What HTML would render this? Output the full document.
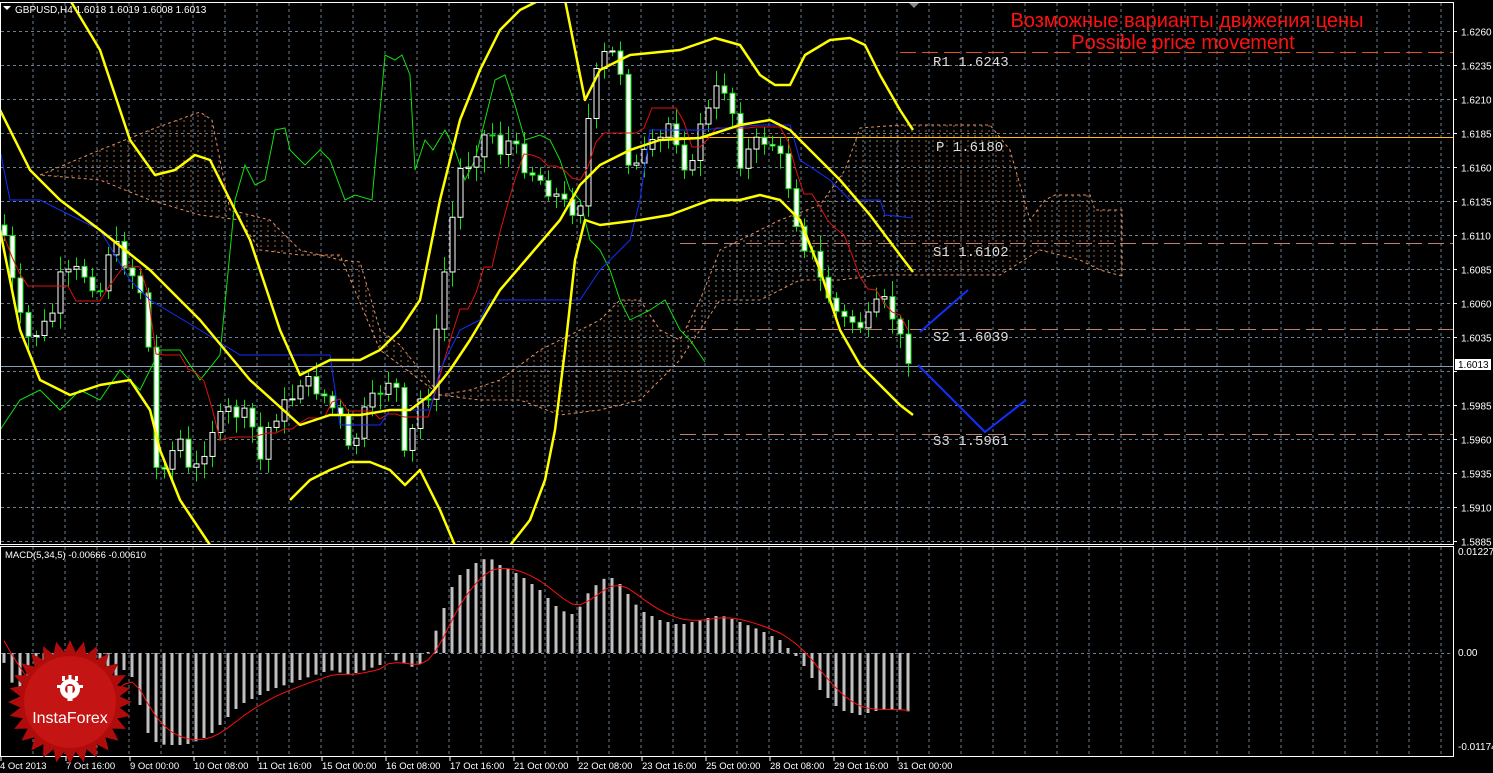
<!DOCTYPE html>
<html><head><meta charset="utf-8"><style>
html,body{margin:0;padding:0;background:#000;width:1493px;height:773px;overflow:hidden}
svg{display:block}
text{font-family:"Liberation Sans",sans-serif}
.mono text{font-family:"Liberation Mono",monospace}
</style></head><body>
<svg id="s" width="1493" height="773" xmlns="http://www.w3.org/2000/svg">
<rect width="1493" height="773" fill="#000"/>
<defs>
<clipPath id="main"><rect x="1" y="3" width="1452" height="541"/></clipPath>
<clipPath id="cloud"><polygon id="cp" points=""/></clipPath>
</defs>
<g id="grid"></g>
<g id="cloudg" clip-path="url(#main)"></g>
<g id="lines" clip-path="url(#main)"></g>
<g id="macd"></g>
<g id="logo" transform="translate(70,702)">
 <polygon id="star" fill="#b00c0c"/>
 <circle r="46" fill="#c41414"/>
 <g fill="#fff" transform="translate(0,-13)">
  <circle r="10"/><circle r="5" fill="#c41414"/>
  <rect x="-2.5" y="-3" width="5" height="15"/>
  <rect x="-8" y="-13" width="3" height="5"/><rect x="5" y="-13" width="3" height="5"/><rect x="-1.5" y="-14" width="3" height="5"/>
  <rect x="-13" y="-4" width="4" height="3"/><rect x="9" y="-4" width="4" height="3"/>
 </g>
 <text x="0" y="21" text-anchor="middle" fill="#fff" font-size="16">InstaForex</text>
</g>
<rect x="0.5" y="2.5" width="1453" height="542" fill="none" stroke="#fff" stroke-width="1"/>
<rect x="0.5" y="546.5" width="1453" height="210" fill="none" stroke="#fff" stroke-width="1"/>
<polygon points="3,6 11,6 7,10" fill="#fff"/>
<polygon points="909,3 919,3 914,8" fill="#888"/>
<text x="15" y="13" fill="#fff" font-size="10">GBPUSD,H4  1.6018 1.6019 1.6008 1.6013</text>
<text x="5" y="558" fill="#fff" font-size="9.5">MACD(5,34,5) -0.00666 -0.00610</text>
<text x="1187" y="27" text-anchor="middle" fill="#ff1010" font-size="20">Возможные варианты движения цены</text>
<text x="1183" y="49" text-anchor="middle" fill="#ff1010" font-size="20">Possible price movement</text>
<g class="mono" font-size="14" fill="#ddd">
<text x="933" y="66">R1 1.6243</text>
<text x="936" y="151">P 1.6180</text>
<text x="933" y="256">S1 1.6102</text>
<text x="933" y="341">S2 1.6039</text>
<text x="933" y="445">S3 1.5961</text>
</g>
<g id="axis" fill="#fff" font-size="10"></g>
</svg>
<script>
var NS="http://www.w3.org/2000/svg";
function el(p,t,a){var e=document.createElementNS(NS,t);for(var k in a)e.setAttribute(k,a[k]);p.appendChild(e);return e;}
var S=document.getElementById('s');
var G=document.getElementById('grid'),L=document.getElementById('lines'),M=document.getElementById('macd'),A=document.getElementById('axis'),C=document.getElementById('cloudg');
function py(p){return 31+(1.6260-p)/0.0025*34;}
for(var x=33;x<1453;x+=32){el(G,'line',{x1:x,y1:3,x2:x,y2:544,stroke:'#6b7d8f','stroke-dasharray':'3,3'});el(G,'line',{x1:x,y1:547,x2:x,y2:756,stroke:'#6b7d8f','stroke-dasharray':'3,3'});}
var prices=['1.6260','1.6235','1.6210','1.6185','1.6160','1.6135','1.6110','1.6085','1.6060','1.6035','1.6010','1.5985','1.5960','1.5935','1.5910','1.5885'];
prices.forEach(function(p){var y=Math.round(py(+p))+0.5;el(G,'line',{x1:1,y1:y,x2:1453,y2:y,stroke:'#6b7d8f','stroke-dasharray':'3,3'});
 el(A,'line',{x1:1453,y1:y,x2:1457,y2:y,stroke:'#fff'});
 if(p!='1.6010'){var t=el(A,'text',{x:1461,y:y+4});t.textContent=p;}});
el(G,'line',{x1:1,y1:653.5,x2:1453,y2:653.5,stroke:'#6b7d8f','stroke-dasharray':'3,3'});
[['0.01227',555],['0.00',656],['-0.01174',750]].forEach(function(a){var t=el(A,'text',{x:1458,y:a[1]});t.textContent=a[0];});
var tl=['4 Oct 2013','7 Oct 16:00','9 Oct 00:00','10 Oct 08:00','11 Oct 16:00','15 Oct 00:00','16 Oct 08:00','17 Oct 16:00','21 Oct 00:00','22 Oct 08:00','23 Oct 16:00','25 Oct 00:00','28 Oct 08:00','29 Oct 16:00','31 Oct 00:00'];
tl.forEach(function(s,i){var x=i*64+(i?1:0);var t=el(A,'text',{x:x+(i?1:0),y:769,'font-size':'9.5'});t.textContent=s;el(A,'line',{x1:x+1,y1:757,x2:x+1,y2:761,stroke:'#fff'});});
el(A,'rect',{x:1455,y:359,width:36,height:11,fill:'#fff'});
var cp=el(A,'text',{x:1458,y:368,fill:'#000'});cp.textContent='1.6013';
el(L,'line',{x1:1,y1:366.5,x2:1453,y2:366.5,stroke:'#8a9bb0'});
el(L,'line',{x1:900,y1:52.5,x2:1453,y2:52.5,stroke:'#e05020','stroke-dasharray':'16,6'});
el(L,'line',{x1:660,y1:137.5,x2:1453,y2:137.5,stroke:'#ffc000'});
el(L,'line',{x1:680,y1:243.5,x2:1453,y2:243.5,stroke:'#c08070','stroke-dasharray':'16,6'});
el(L,'line',{x1:690,y1:329.5,x2:1453,y2:329.5,stroke:'#c08070','stroke-dasharray':'16,6'});
el(L,'line',{x1:680,y1:434.5,x2:1453,y2:434.5,stroke:'#c08070','stroke-dasharray':'16,6'});
function pts(a){return a.map(function(p){return p.join(',')}).join(' ');}
function interp(a,x){for(var i=1;i<a.length;i++){if(x<=a[i][0]){var t=(x-a[i-1][0])/(a[i][0]-a[i-1][0]);return a[i-1][1]+t*(a[i][1]-a[i-1][1]);}}return a[a.length-1][1];}
var spanA=[[40,175],[100,150],[150,130],[200,112],[212,120],[230,210],[270,220],[300,250],[340,260],[360,262],[380,330],[400,345],[440,395],[470,390],[500,380],[540,350],[580,330],[600,320],[620,300],[640,300],[660,330],[680,340],[700,300],[720,250],[740,240],[780,220],[820,205],[845,170],[860,128],[900,125],[950,125],[990,125],[1010,150],[1030,220],[1045,200],[1055,195],[1090,195],[1095,210],[1122,210],[1122,276]];
var spanB=[[1122,276],[1100,270],[1080,260],[1040,250],[1000,275],[960,275],[920,275],[880,275],[840,280],[800,280],[760,300],[720,300],[680,360],[640,400],[600,410],[560,415],[520,400],[480,400],[440,395],[380,350],[340,255],[300,255],[260,250],[240,220],[200,215],[150,200],[100,180],[40,175]];
document.getElementById('cp').setAttribute('points',pts(spanA.concat(spanB)));
var cg=el(C,'g',{'clip-path':'url(#cloud)'});
for(var x=44;x<1124;x+=7){el(cg,'line',{x1:x,y1:100,x2:x,y2:430,stroke:(x>700&&x<900)?'#c8b0a0':'#d89060','stroke-dasharray':'2,3','stroke-width':1,opacity:0.75});}
el(C,'polyline',{points:pts(spanA),fill:'none',stroke:'#e09060','stroke-dasharray':'3,3'});
el(C,'polyline',{points:pts(spanB),fill:'none',stroke:'#e09060','stroke-dasharray':'3,3'});
var green=[[0,430],[20,400],[40,390],[60,410],[80,390],[100,400],[120,370],[140,390],[160,350],[180,350],[200,380],[220,355],[235,200],[245,165],[255,185],[265,180],[275,130],[285,128],[290,150],[300,160],[305,165],[320,150],[330,160],[345,200],[355,195],[372,200],[385,55],[395,60],[402,55],[410,75],[415,170],[425,140],[433,150],[445,130],[455,150],[465,180],[475,160],[485,120],[495,80],[505,75],[515,105],[525,140],[540,135],[550,140],[560,160],[570,190],[580,200],[590,240],[600,250],[610,270],[620,300],[630,320],[650,310],[665,300],[680,330],[690,340],[705,362]];
el(L,'polyline',{points:pts(green),fill:'none',stroke:'#10e010','stroke-width':1});
var path=[[3,230],[15,300],[25,340],[40,330],[50,320],[60,280],[80,270],[100,290],[110,240],[130,270],[145,300],[150,380],[155,470],[165,460],[180,440],[190,480],[200,460],[210,430],[230,410],[250,420],[260,460],[270,420],[290,400],[300,380],[320,390],[340,420],[350,460],[360,420],[380,390],[395,370],[400,470],[410,440],[420,400],[430,390],[440,300],[450,230],[460,170],[470,160],[480,140],[490,130],[500,150],[510,140],[520,160],[540,180],[560,200],[570,210],[580,200],[590,100],[600,60],[610,50],[620,70],[630,180],[640,160],[650,150],[660,140],[670,120],[680,150],[690,180],[700,120],[710,110],[720,80],[730,100],[740,160],[750,150],[760,140],[770,140],[780,160],[790,190],[800,240],[810,250],[820,280],[830,300],[840,320],[850,320],[860,325],[870,320],[880,300],[890,310],[900,340],[912,362]];
var seed=7;function rnd(){seed=(seed*9301+49297)%233280;return seed/233280;}
var closes=[],prev=225,CG=el(L,'g',{});
for(var i=0;i<114;i++){var x=4+8*i;var c=interp(path,x)+(rnd()-0.5)*18;var o=prev;prev=c;closes.push(c);
 var hi=Math.min(o,c)-4-rnd()*12,lo=Math.max(o,c)+4+rnd()*12;
 el(CG,'line',{x1:x+.5,y1:hi,x2:x+.5,y2:lo,stroke:'#10e010'});
 var up=c<o;el(CG,'rect',{x:x-2,y:Math.min(o,c),width:5,height:Math.max(1,Math.abs(o-c)),fill:up?'#000':'#fff',stroke:up?'#fff':'#10e010','stroke-width':1});}
var red=[];for(var i=0;i<114;i++){var a=Math.max(0,i-8),mn=1e9,mx=-1e9;for(var j=a;j<=i;j++){mn=Math.min(mn,closes[j]);mx=Math.max(mx,closes[j]);}red.push([4+8*i,Math.round((mn+mx)/2)]);}
el(L,'polyline',{points:pts(red),fill:'none',stroke:'#e01010'});
var blue=[[0,150],[10,200],[40,200],[100,230],[130,280],[150,300],[200,330],[240,355],[330,355],[340,425],[380,425],[390,410],[430,410],[440,370],[460,330],[480,320],[490,300],[580,300],[600,270],[620,250],[630,240],[640,200],[650,130],[700,130],[760,125],[790,125],[800,160],[830,180],[850,200],[880,200],[885,215],[913,218]];
el(L,'polyline',{points:pts(blue),fill:'none',stroke:'#1030ff'});
var yA=[[70,0],[100,50],[130,140],[155,175],[175,170],[195,155],[210,160],[230,200],[250,240],[260,270],[280,330],[300,375],[330,360],[360,360],[380,350],[400,330],[420,300],[430,250],[440,200],[460,120],[480,70],[500,30],[520,10],[540,0]];
var yA2=[[565,0],[575,50],[585,100],[600,70],[630,55],[680,50],[715,38],[740,45],[760,75],[775,85],[790,85],[805,55],[830,40],[850,38],[865,45],[880,75],[900,110],[913,130]];
var yB=[[0,110],[30,170],[60,200],[100,230],[150,270],[200,320],[250,380],[300,425],[330,415],[360,415],[390,410],[410,410],[430,395],[450,370],[470,340],[500,290],[530,255],[560,220],[580,185],[600,165],[630,150],[660,140],[700,138],[740,125],[770,120],[790,130],[810,150],[840,180],[870,215],[900,255],[913,272]];
var yC=[[0,230],[20,330],[40,380],[70,395],[100,385],[130,380],[150,410],[160,450],[180,500],[200,530],[212,548]];
var yC2=[[290,500],[310,480],[330,470],[350,462],[370,462],[390,470],[405,485],[420,470],[440,510],[456,548]];
var yC3=[[508,548],[530,520],[545,480],[555,430],[565,350],[575,260],[585,220],[600,225],[640,220],[670,215],[710,200],[740,200],[760,195],[780,200],[800,220],[820,270],[840,330],[860,365],[880,385],[900,405],[913,415]];
[yA,yA2,yB,yC,yC2,yC3].forEach(function(a){el(L,'polyline',{points:pts(a),fill:'none',stroke:'#ffff00','stroke-width':2.5,'stroke-linejoin':'round'});});
el(L,'polyline',{points:'920,332 968,290',fill:'none',stroke:'#1030ff','stroke-width':2});
el(L,'polyline',{points:'918,365 985,432 1026,400',fill:'none',stroke:'#1030ff','stroke-width':2});
var mk=[[3,660],[10,680],[25,700],[50,720],[100,700],[120,670],[130,670],[150,740],[165,745],[185,745],[200,740],[210,735],[240,705],[270,690],[300,680],[330,670],[350,675],[380,665],[390,650],[395,660],[415,668],[425,660],[440,620],[450,590],[460,575],[480,560],[490,558],[500,565],[520,575],[540,590],[560,610],[575,615],[590,590],[605,578],[615,578],[625,590],[640,610],[660,620],[680,625],[700,620],[720,615],[735,620],[760,630],[780,640],[800,660],[820,690],[840,710],[860,715],[880,710],[900,710],[912,712]];
var vals=[];
for(var i=0;i<114;i++){var x=4+8*i;var v=interp(mk,x);vals.push(v);var y0=Math.min(653,v),h=Math.abs(v-653);el(M,'rect',{x:x-1.5,y:y0,width:3,height:Math.max(h,1),fill:'#c0c0c0'});}
var sig=[],s=630;for(var i=0;i<114;i++){s=s+(vals[i]-s)*0.33;sig.push([4+8*i,s.toFixed(1)]);}
el(M,'polyline',{points:pts(sig),fill:'none',stroke:'#ff1010'});
var sp=[];for(var i=0;i<56;i++){var r=i%2?50:62,a=i*Math.PI/28;sp.push([(r*Math.cos(a)).toFixed(1),(r*Math.sin(a)).toFixed(1)]);}
document.getElementById('star').setAttribute('points',pts(sp));
S.appendChild(document.getElementById('logo'));
</script>
</body></html>
